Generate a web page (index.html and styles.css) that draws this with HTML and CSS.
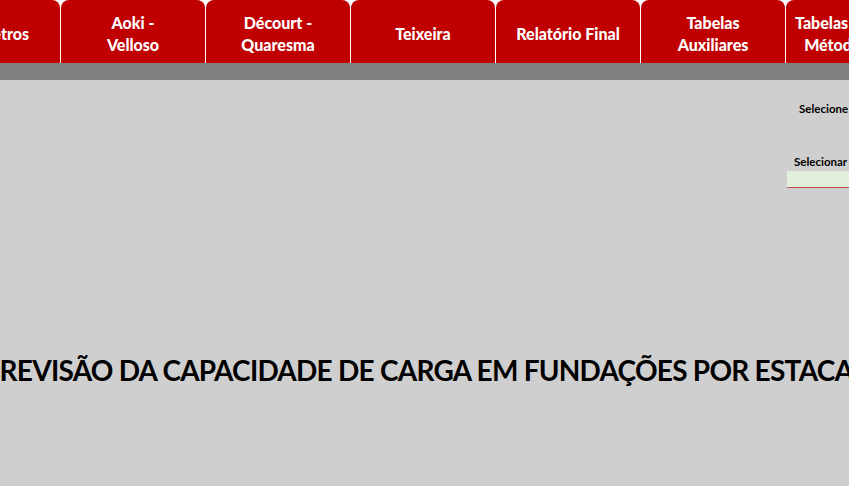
FILE: index.html
```html
<!DOCTYPE html>
<html lang="pt">
<head>
<meta charset="utf-8">
<link rel="stylesheet" href="styles.css">
</head>
<body>
<nav class="tabs">
  <div class="tab">Parâmetros</div>
  <div class="tab">Aoki -<br>Velloso</div>
  <div class="tab">Décourt -<br>Quaresma</div>
  <div class="tab">Teixeira</div>
  <div class="tab">Relatório Final</div>
  <div class="tab">Tabelas<br>Auxiliares</div>
  <div class="tab tab-last"><span>Tabelas dos<br>Métodos</span></div>
</nav>
<div class="bar"></div>
<main class="sheet">
  <div class="side">
    <div class="label label-1">Selecione o tipo</div>
    <div class="label label-2">Selecionar estaca</div>
    <div class="input"></div>
  </div>
  <h1 class="title">PREVISÃO DA CAPACIDADE DE CARGA EM FUNDAÇÕES POR ESTACAS</h1>
</main>
</body>
</html>
```
FILE: styles.css
```css
html, body {
  margin: 0;
  padding: 0;
}
body {
  width: 849px;
  height: 486px;
  overflow: hidden;
  background: #d0cfcf;
  font-family: Lato, "Open Sans", sans-serif;
}
.tabs {
  display: flex;
  gap: 1px;
  height: 63px;
  margin-left: -84px;
  width: 1200px;
  background: #ffffff;
}
.tab {
  flex: 0 0 144px;
  box-sizing: border-box;
  height: 63px;
  padding-top: 5px;
  background: #c00000;
  border-radius: 8px 8px 0 0;
  color: #ffffff;
  font-weight: 900;
  font-size: 16px;
  line-height: 22px;
  display: flex;
  align-items: center;
  justify-content: center;
  text-align: center;
}
.tab-last {
  justify-content: flex-start;
  padding-left: 9px;
}
.bar {
  height: 17px;
  background: #808080;
}
.sheet {
  display: flex;
  flex-direction: column;
}
.side {
  display: flex;
  flex-direction: column;
  margin-left: 787px;
  padding-top: 22px;
}
.label {
  font-size: 11.5px;
  font-weight: 700;
  color: #000;
  white-space: nowrap;
  line-height: 14px;
}
.label-1 {
  padding-left: 12px;
}
.label-2 {
  padding-left: 7px;
  margin-top: 39px;
}
.input {
  margin-top: 2px;
  width: 80px;
  height: 16px;
  background: #e2efda;
  border-bottom: 1.5px solid #c0504d;
}
.title {
  margin: 165px 0 0 -17px;
  font-size: 28px;
  font-weight: 700;
  white-space: nowrap;
  color: #000;
  line-height: 34px;
  letter-spacing: -0.75px;
}
```
